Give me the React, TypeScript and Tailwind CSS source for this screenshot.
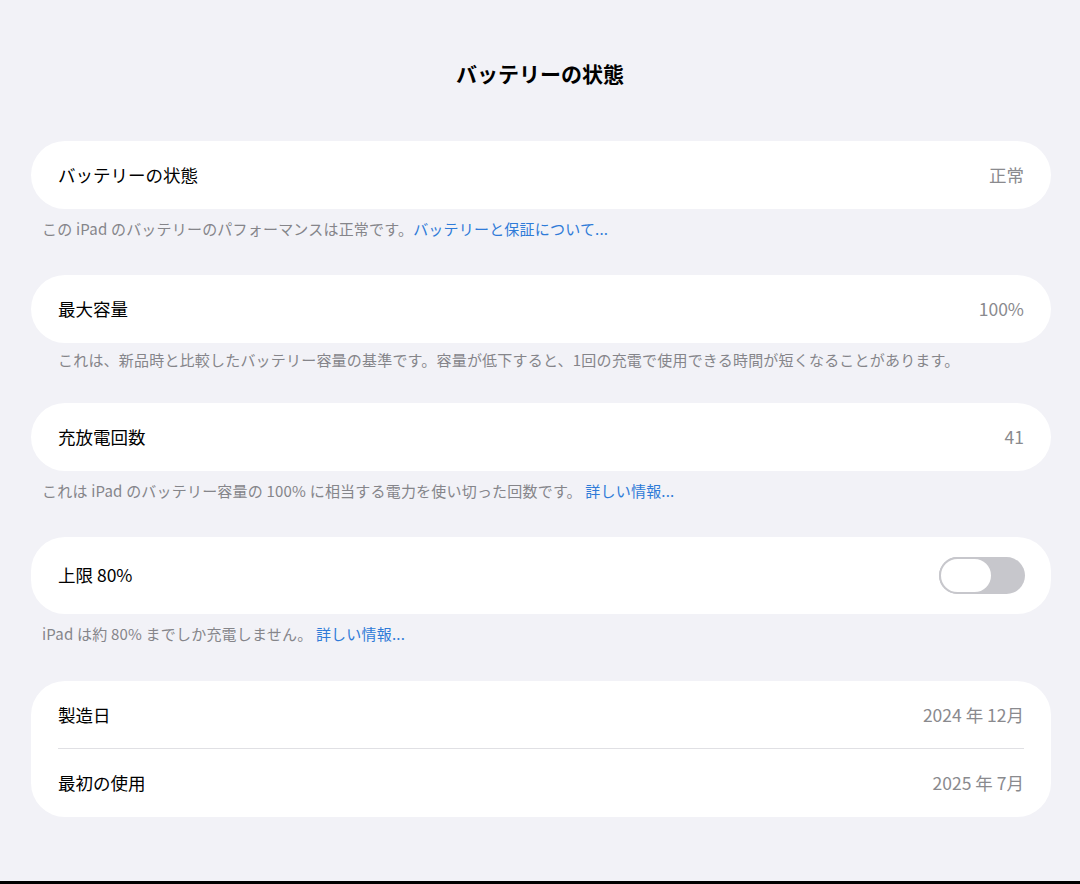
import React from "react";

const F = { fontFamily: '"Noto Sans CJK JP", "Noto Sans", sans-serif' };

function Row({ label, value }: { label: string; value?: React.ReactNode }) {
  return (
    <div className="flex h-[68px] items-center justify-between pl-[27px] pr-[27px]">
      <span className="text-[17.5px] text-black">{label}</span>
      {value !== undefined && <span className="text-[17.5px] text-[#8a8a8e]">{value}</span>}
    </div>
  );
}

export default function App() {
  return (
    <div style={F} className="w-[1080px] h-[884px] bg-[#f2f2f7] overflow-hidden relative">
      <div className="h-[147px] pt-[57px] text-center text-[21px] font-bold text-black leading-[32px]">バッテリーの状態</div>
      <div className="ml-[31px] w-[1020px] -mt-[6px]">
        <div className="bg-white rounded-[34px]"><Row label="バッテリーの状態" value="正常" /></div>
        <div className="h-[66px] pt-[8px] pl-[11px] text-[15px] text-[#85858a] leading-[24px] tracking-[0.2px]">
          この iPad のバッテリーのパフォーマンスは正常です。<span className="text-[#2f7bd8]">バッテリーと保証について...</span>
        </div>
        <div className="bg-white rounded-[34px]"><Row label="最大容量" value="100%" /></div>
        <div className="h-[60px] pt-[5px] pl-[27px] text-[15px] text-[#85858a] leading-[24px] tracking-[0.2px]">
          これは、新品時と比較したバッテリー容量の基準です。容量が低下すると、1回の充電で使用できる時間が短くなることがあります。
        </div>
        <div className="bg-white rounded-[34px]"><Row label="充放電回数" value="41" /></div>
        <div className="h-[66px] pt-[8px] pl-[11px] text-[15px] text-[#85858a] leading-[24px] tracking-[0.2px]">
          これは iPad のバッテリー容量の 100% に相当する電力を使い切った回数です。 <span className="text-[#2f7bd8]">詳しい情報...</span>
        </div>
        <div className="bg-white rounded-[34px] h-[77px] flex items-center justify-between pl-[27px] pr-[26px]">
          <span className="text-[17.5px] text-black">上限 80%</span>
          <div className="w-[86px] h-[37px] rounded-full bg-[#c7c7cc] relative">
            <div className="absolute left-0 top-0 w-[54px] h-[37px] rounded-full bg-white border-2 border-[#c7c7cc]"></div>
          </div>
        </div>
        <div className="h-[67px] pt-[8px] pl-[11px] text-[15px] text-[#85858a] leading-[24px] tracking-[0.2px]">
          iPad は約 80% までしか充電しません。 <span className="text-[#2f7bd8]">詳しい情報...</span>
        </div>
        <div className="bg-white rounded-[34px]">
          <Row label="製造日" value="2024 年 12月" />
          <div className="mx-[27px] h-px bg-[#e0e0e4] -mt-px"></div>
          <Row label="最初の使用" value="2025 年 7月" />
        </div>
      </div>
      <div className="absolute left-0 right-0 bottom-0 h-[3px] bg-black"></div>
    </div>
  );
}
